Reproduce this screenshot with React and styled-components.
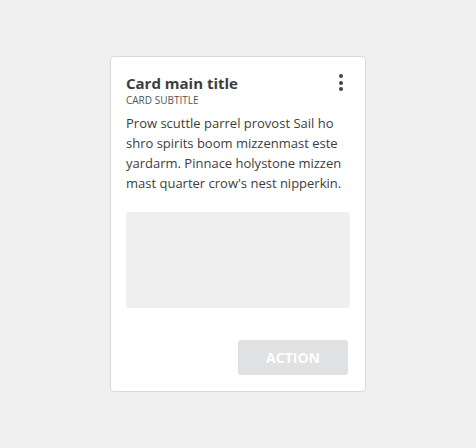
import React from 'react';
import styled, {createGlobalStyle} from 'styled-components';

const GlobalStyle = createGlobalStyle`
    html, body {
        margin: 0;
        padding: 0;
        background: #f0f0f0;
        font-family: "Open Sans", "Noto Sans", sans-serif;
    }
`

export default function App(){
    return(
        <Page>
            <GlobalStyle/>
            <Card>
                <CardHeader>
                    <div>
                        <Title>Card main title</Title>
                        <Subtitle>Card subtitle</Subtitle>
                    </div>
                    <MenuButton aria-label='more'>
                        <span/><span/><span/>
                    </MenuButton>
                </CardHeader>
                <Body>
                    Prow scuttle parrel provost Sail ho shro spirits boom mizzenmast este
                    yardarm. Pinnace holystone mizzen mast quarter crow's nest nipperkin.
                </Body>
                <Media/>
                <Actions>
                    <ActionButton disabled>Action</ActionButton>
                </Actions>
            </Card>
        </Page>
    )
}

const Page = styled.div`
    width: 476px;
    height: 448px;
    display: flex;
    align-items: center;
    justify-content: center;
`

const Card = styled.div`
    box-sizing: border-box;
    width: 256px;
    padding: 16px 15px;
    background: #fff;
    border: 1px solid #d9d9d9;
    border-radius: 4px;
    display: flex;
    flex-direction: column;
`

const CardHeader = styled.div`
    display: flex;
    justify-content: space-between;
    align-items: flex-start;
`

const Title = styled.div`
    font-size: 15px;
    line-height: 20px;
    font-weight: 700;
    color: #3d3d3d;
`

const Subtitle = styled.div`
    font-size: 10px;
    line-height: 14px;
    text-transform: uppercase;
    color: #555;
`

const MenuButton = styled.button`
    border: none;
    background: transparent;
    padding: 0;
    margin: 1px 7px 0 0;
    display: flex;
    flex-direction: column;
    gap: 2.5px;

    span{
        width: 4px;
        height: 4px;
        border-radius: 50%;
        background: #444;
    }
`

const Body = styled.p`
    margin: 6px 0 0;
    font-size: 13px;
    line-height: 20px;
    color: #3d3d3d;
`

const Media = styled.div`
    margin-top: 19px;
    height: 96px;
    background: #efefef;
    border-radius: 3px;
`

const Actions = styled.div`
    margin-top: 32px;
    display: flex;
    justify-content: flex-end;
`

const ActionButton = styled.button`
    width: 110px;
    height: 35px;
    margin-right: 2px;
    border: none;
    border-radius: 3px;
    background: #e0e1e2;
    color: #fff;
    font-family: inherit;
    font-size: 14px;
    font-weight: 700;
    text-transform: uppercase;
`
